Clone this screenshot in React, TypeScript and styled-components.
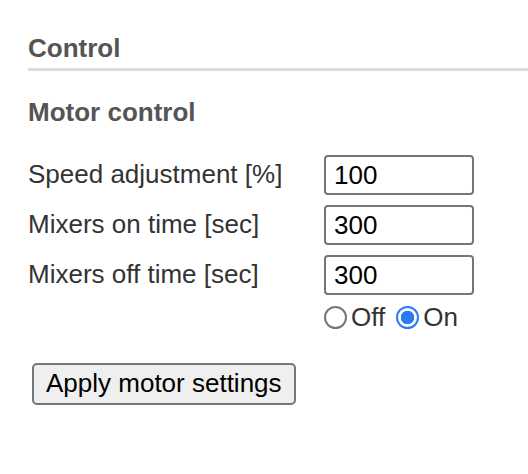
import styled, { createGlobalStyle } from 'styled-components';

const GlobalStyle = createGlobalStyle`
  html, body {
    margin: 0;
    padding: 0;
    background: #fff;
  }
  body {
    font-family: "Liberation Sans", Arial, Helvetica, sans-serif;
  }
`;

const Page = styled.div`
  padding: 33px 0 0 28px;
`;

const SectionTitle = styled.h2`
  margin: 0;
  padding-bottom: 5px;
  font-size: 26px;
  font-weight: bold;
  line-height: 30px;
  color: #555;
  border-bottom: 3px solid #dcdcdc;
`;

const SubTitle = styled.h3`
  margin: 26px 0 0;
  font-size: 26px;
  font-weight: bold;
  line-height: 30px;
  color: #555;
`;

const Form = styled.div`
  display: grid;
  grid-template-columns: 296px auto;
  row-gap: 10px;
  margin-top: 28px;
  align-items: center;
`;

const Label = styled.label`
  font-size: 26px;
  color: #333;
  line-height: 30px;
  padding-bottom: 2px;
`;

const NumberInput = styled.input`
  box-sizing: border-box;
  width: 150px;
  height: 40px;
  margin: 0;
  padding: 0 8px;
  font-family: inherit;
  font-size: 26px;
  color: #000;
  background: #fff;
  border: 2px solid #767676;
  border-radius: 4px;
  outline: none;
`;

const RadioRow = styled.div`
  grid-column: 2;
  display: flex;
  align-items: center;
  margin-top: -10px;
  padding-top: 7px;
  font-size: 26px;
  color: #333;
`;

const RadioLabel = styled.label`
  display: flex;
  align-items: center;
  gap: 4px;
  margin-right: 11px;
  line-height: 30px;
`;

const Radio = styled.input`
  appearance: none;
  flex: none;
  box-sizing: border-box;
  width: 23px;
  height: 23px;
  margin: 0;
  border: 2px solid #767676;
  border-radius: 50%;
  background: #fff;

  &:checked {
    border-color: #2b7bf3;
    background: radial-gradient(circle, #2b7bf3 0 6.5px, #fff 7px);
  }
`;

const Button = styled.button`
  margin: 31px 0 0 4px;
  padding: 3px 12px 5px;
  font-family: inherit;
  font-size: 26px;
  line-height: 30px;
  color: #000;
  background: #efefef;
  border: 2px solid #767676;
  border-radius: 5px;
`;

export default function App() {
  return (
    <Page>
      <GlobalStyle />
      <SectionTitle>Control</SectionTitle>
      <SubTitle>Motor control</SubTitle>
      <Form>
        <Label>Speed adjustment [%]</Label>
        <NumberInput type="text" defaultValue="100" />
        <Label>Mixers on time [sec]</Label>
        <NumberInput type="text" defaultValue="300" />
        <Label>Mixers off time [sec]</Label>
        <NumberInput type="text" defaultValue="300" />
        <RadioRow>
          <RadioLabel>
            <Radio type="radio" name="mixers" value="off" />
            Off
          </RadioLabel>
          <RadioLabel>
            <Radio type="radio" name="mixers" value="on" defaultChecked />
            On
          </RadioLabel>
        </RadioRow>
      </Form>
      <Button type="button">Apply motor settings</Button>
    </Page>
  );
}
